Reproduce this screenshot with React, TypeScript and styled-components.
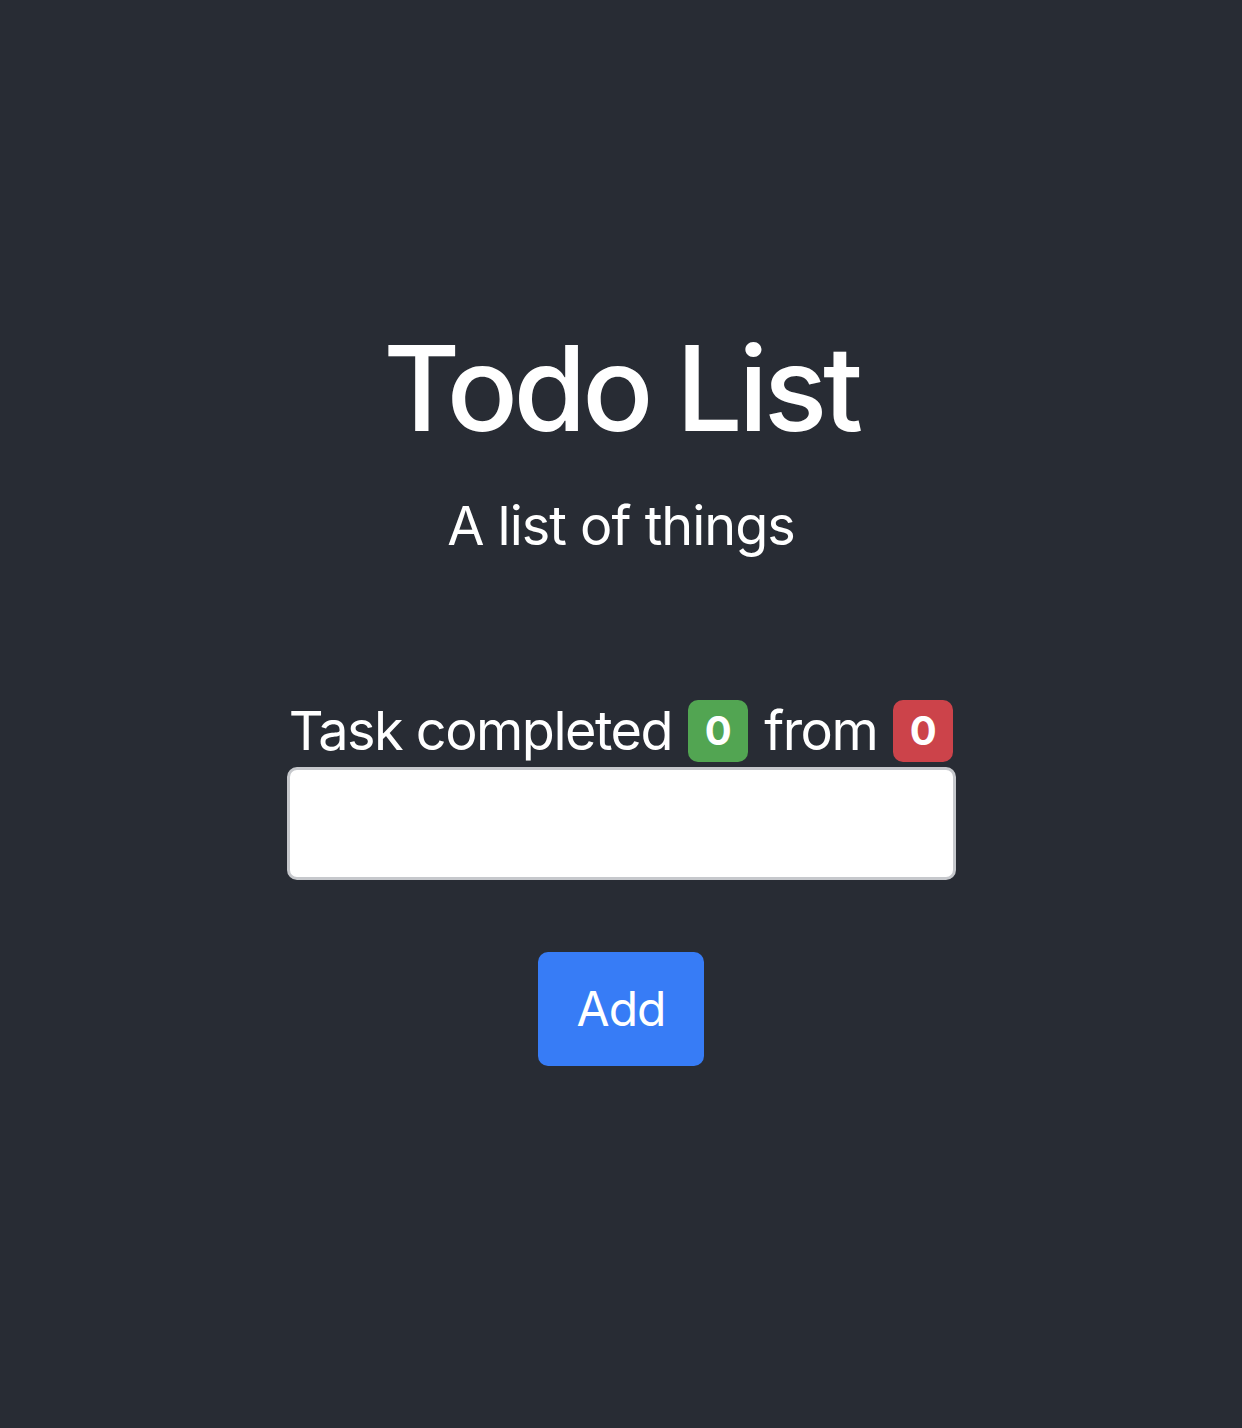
import styled, { createGlobalStyle } from "styled-components";

const GlobalStyle = createGlobalStyle`
  html, body {
    margin: 0;
    padding: 0;
    background-color: #282c34;
  }
  body {
    font-family: Inter, "Noto Sans", "Liberation Sans", sans-serif;
  }
`;

const Page = styled.div`
  box-sizing: border-box;
  min-height: 100vh;
  padding-bottom: 44px;
  display: flex;
  flex-direction: column;
  align-items: center;
  justify-content: center;
  color: white;
  text-align: center;
`;

const Title = styled.h1`
  margin: 0;
  font-size: 118px;
  font-weight: 500;
  line-height: 1.2;
  letter-spacing: -4.4px;
`;

const Subtitle = styled.p`
  margin: 34px 0 0;
  font-size: 54px;
  font-weight: 400;
  line-height: 1.2;
  letter-spacing: -1px;
`;

const Form = styled.div`
  margin-top: 140px;
  display: flex;
  flex-direction: column;
  align-items: center;
`;

const Counter = styled.div`
  display: flex;
  align-items: center;
  gap: 16px;
  font-size: 54px;
  line-height: 1.2;
  letter-spacing: -1.5px;
`;

const Badge = styled.span<{ $tone: "success" | "danger" }>`
  display: inline-flex;
  align-items: center;
  justify-content: center;
  width: 60px;
  height: 62px;
  border-radius: 10px;
  background-color: ${(p) => (p.$tone === "success" ? "#52a552" : "#cc434a")};
  font-size: 40px;
  font-weight: 700;
  line-height: 1;
  letter-spacing: 0;
`;

const TaskInput = styled.input`
  box-sizing: border-box;
  margin-top: 3px;
  width: 669px;
  height: 113px;
  border: 3px solid #c6c8cc;
  border-radius: 10px;
  background: white;
  font-size: 40px;
  padding: 0 20px;
  outline: none;
`;

const AddButton = styled.button`
  margin-top: 72px;
  width: 166px;
  height: 114px;
  border: none;
  border-radius: 10px;
  background-color: #377cf6;
  color: white;
  font-family: inherit;
  font-size: 48px;
  letter-spacing: -1px;
  cursor: pointer;
`;

export default function App() {
  const completed = 0;
  const total = 0;
  return (
    <>
      <GlobalStyle />
      <Page>
        <Title>Todo List</Title>
        <Subtitle>A list of things</Subtitle>
        <Form>
          <Counter>
            <span>Task completed</span>
            <Badge $tone="success">{completed}</Badge>
            <span>from</span>
            <Badge $tone="danger">{total}</Badge>
          </Counter>
          <TaskInput type="text" />
          <AddButton>Add</AddButton>
        </Form>
      </Page>
    </>
  );
}
